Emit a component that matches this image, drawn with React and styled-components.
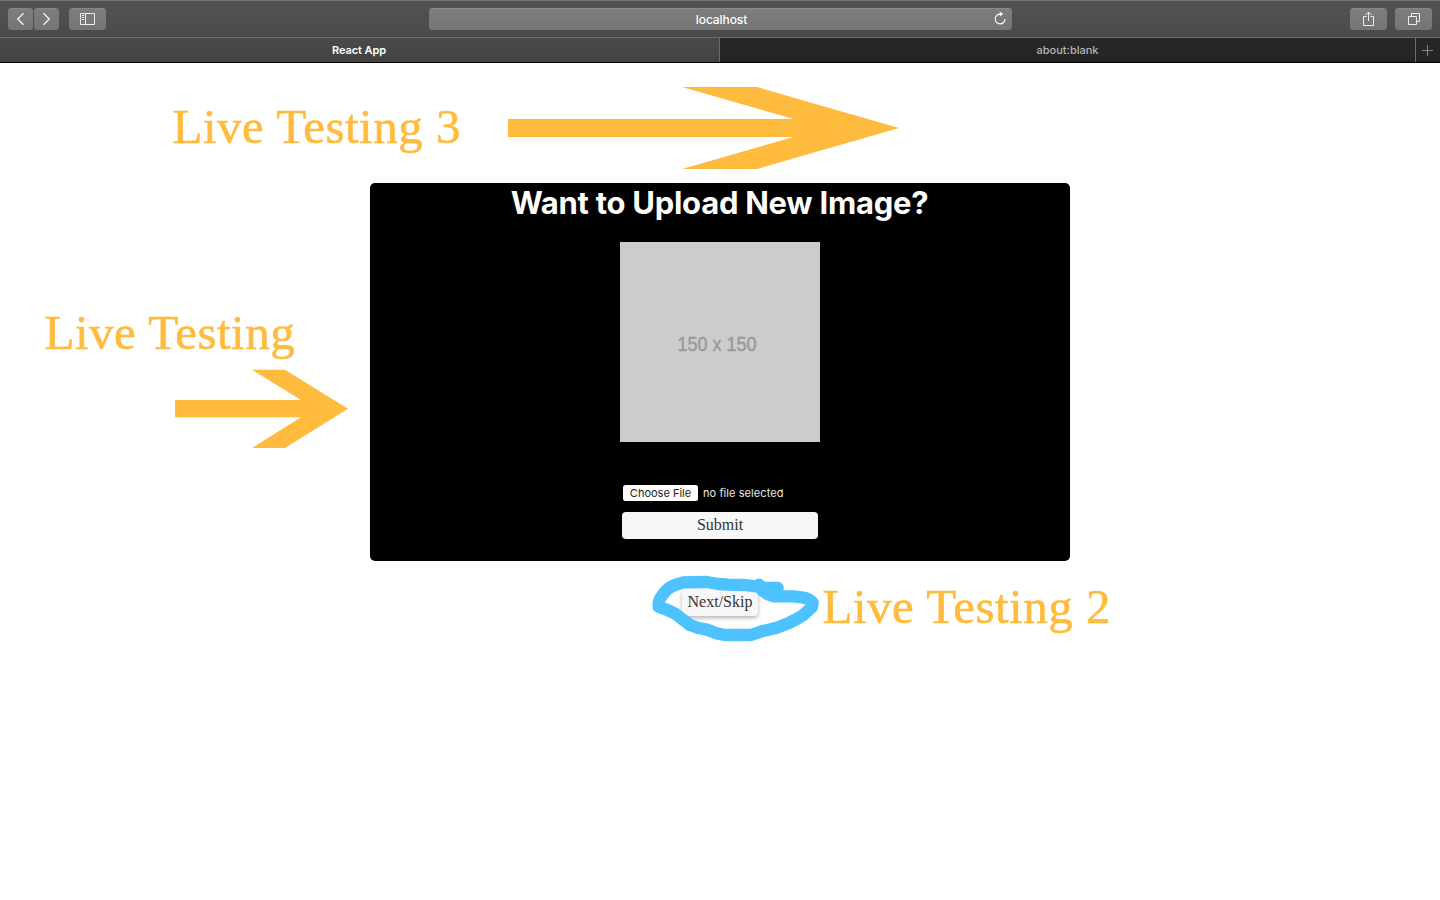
import React from "react";
import styled, { createGlobalStyle } from "styled-components";

const GlobalStyle = createGlobalStyle`
  * { box-sizing: border-box; }
  html, body { margin: 0; background: #fff; overflow: hidden; }
  button { font: inherit; border: 0; padding: 0; margin: 0; }
`;

const Page = styled.div`
  position: relative;
  width: 1440px;
  height: 900px;
  overflow: hidden;
  font-family: "Liberation Serif", "Times New Roman", serif;
`;

const Toolbar = styled.header`
  display: grid;
  grid-template-columns: 429px 583px 1fr;
  align-items: start;
  height: 37px;
  padding-top: 7px;
  border-top: 1px solid #727272;
  background: linear-gradient(#535353, #4a4a4a);
`;

const ToolGroup = styled.div`
  display: flex;
  gap: ${(p) => p.$gap}px;
  justify-content: ${(p) => (p.$end ? "flex-end" : "flex-start")};
  padding: 0 ${(p) => (p.$end ? 8 : 0)}px 0 ${(p) => (p.$end ? 0 : 8)}px;
`;

const NavPair = styled.div`
  display: flex;
  gap: 1px;
`;

const ToolButton = styled.button`
  display: flex;
  align-items: center;
  justify-content: center;
  width: ${(p) => p.$width || 37}px;
  height: 22px;
  border-radius: 3.5px;
  background: linear-gradient(#7d7d7d, #747474);
  border-top: 1px solid #868686;
  color: #ececec;
  svg { display: block; margin-top: -1px; }
`;

const AddressBar = styled.div`
  display: grid;
  grid-template-columns: 24px 1fr 24px;
  align-items: center;
  justify-items: center;
  height: 22px;
  border-radius: 3.5px;
  border-top: 1px solid #8a8a8a;
  background: linear-gradient(#7d7d7d, #757575);
  color: #fff;
  font: 500 12px/20px Inter, sans-serif;
  letter-spacing: -0.1px;
  svg { display: block; margin-bottom: 3px; }
`;

const Address = styled.span`
  grid-column: 2;
  padding-left: 2px;
  padding-top: 1px;
`;

const TabBar = styled.nav`
  display: grid;
  grid-template-columns: 720px 696px 24px;
  height: 26px;
  border-top: 1px solid #6c6c6c;
  border-bottom: 1px solid #000;
`;

const Tab = styled.div`
  display: flex;
  align-items: center;
  justify-content: center;
  padding-right: ${(p) => (p.$last ? 2 : p.$active ? 1 : 0)}px;
  border-right: ${(p) => (p.$last ? 0 : 1)}px solid #6c6c6c;
  background: ${(p) => (p.$active ? "linear-gradient(#494949, #434343)" : "linear-gradient(#282828, #242424)")};
  color: ${(p) => (p.$active ? "#fff" : "#b4b4b4")};
  font: ${(p) => (p.$active ? 600 : 500)} 11px/24px Inter, sans-serif;
  letter-spacing: ${(p) => (p.$active ? "-0.1px" : "0")};
`;

const Content = styled.main`
  display: flex;
  flex-direction: column;
  align-items: center;
  padding-top: 120px;
`;

const UploadCard = styled.section`
  display: flex;
  flex-direction: column;
  align-items: center;
  width: 700px;
  height: 378px;
  border-radius: 5px;
  background: #000;
`;

const Title = styled.h1`
  margin: 0;
  height: 59px;
  color: #fff;
  font: 700 31px/39px Inter, sans-serif;
  letter-spacing: -0.27px;
  padding-right: 1px;
  white-space: nowrap;
`;

const Placeholder = styled.div`
  display: flex;
  align-items: center;
  justify-content: center;
  width: 200px;
  height: 200px;
  padding-top: 4px;
  padding-right: 6px;
  background: #ccc;
  color: #999;
  font: 20px/24px "Liberation Sans", Arial, sans-serif;
  -webkit-text-stroke: 0.4px #999;
  span { transform: scaleX(0.9); white-space: nowrap; }
`;

const FileField = styled.div`
  display: flex;
  align-items: center;
  gap: 5px;
  width: 194px;
  height: 16px;
  margin-top: 43px;
  color: #e8e8e8;
  font: 400 11px/16px Inter, sans-serif;
  letter-spacing: 0.08px;
  white-space: nowrap;
`;

const FileButton = styled.button`
  width: 75px;
  height: 16px;
  border-radius: 2.5px;
  background: #fff;
  color: #222;
  letter-spacing: 0;
`;

const ActionButton = styled.button`
  width: ${(p) => p.$width}px;
  height: ${(p) => p.$height}px;
  margin-top: ${(p) => p.$top}px;
  border-radius: 4px;
  background: #f7f7f7;
  color: #333;
  font-size: 16px;
  line-height: ${(p) => p.$height - 2}px;
  padding-bottom: 2px;
  white-space: nowrap;
  box-shadow: ${(p) => (p.$raised ? "0 2px 4px rgba(0, 0, 0, 0.3)" : "none")};
`;

const SkipRow = styled.div`
  display: flex;
  width: 76px;
`;

const Ink = styled.svg`
  position: absolute;
  left: 0;
  top: 0;
  pointer-events: none;
`;

const Note = styled.div`
  position: absolute;
  left: ${(p) => p.$x}px;
  top: ${(p) => p.$y}px;
  color: #ffbb3d;
  font-size: 49px;
  line-height: 56px;
  letter-spacing: 0.5px;
  -webkit-text-stroke: 0.6px #ffbb3d;
  white-space: nowrap;
`;

const Icon = ({ w, h, children, sw = 1 }) => (
  <svg width={w} height={h} viewBox={`0 0 ${w} ${h}`} fill="none" stroke="currentColor" strokeWidth={sw}>
    {children}
  </svg>
);

export default function App() {
  return (
    <Page>
      <GlobalStyle />
      <Toolbar>
        <ToolGroup $gap={10}>
          <NavPair>
            <ToolButton $width={25} aria-label="Back">
              <Icon w={9} h={14} sw={1.5}><path d="M7.5 1.3 1.8 7l5.7 5.7" /></Icon>
            </ToolButton>
            <ToolButton $width={25} aria-label="Forward">
              <Icon w={9} h={14} sw={1.5}><path d="M1.5 1.3 7.2 7l-5.7 5.7" /></Icon>
            </ToolButton>
          </NavPair>
          <ToolButton aria-label="Sidebar">
            <Icon w={15} h={12}>
              <path d="M.5.5h14v11H.5zM5.5.5v11M2 2.5h2M2 4.5h2M2 6.5h2" />
            </Icon>
          </ToolButton>
        </ToolGroup>
        <AddressBar>
          <Address>localhost</Address>
          <Icon w={12} h={14} sw={1.1}>
            <path d="M6.3 3.1A4.9 4.9 0 1 0 11 8" />
            <path d="M5.8.4 9.2 3.1 5.8 5.6z" fill="currentColor" stroke="none" />
          </Icon>
        </AddressBar>
        <ToolGroup $gap={8} $end>
          <ToolButton aria-label="Share">
            <Icon w={13} h={16}>
              <path d="M4.5 5.5h-3v9h10v-9h-3M6.5 10V1M3.5 4l3-3 3 3" />
            </Icon>
          </ToolButton>
          <ToolButton aria-label="Tabs">
            <Icon w={13} h={14}>
              <path d="M1.5 4.5h8v8h-8zM4.5 4V1.5h8v8H10" />
            </Icon>
          </ToolButton>
        </ToolGroup>
      </Toolbar>
      <TabBar>
        <Tab $active>React App</Tab>
        <Tab>about:blank</Tab>
        <Tab $last>
          <Icon w={11} h={11}><path stroke="#858585" d="M5.5 0v11M0 5.5h11" /></Icon>
        </Tab>
      </TabBar>
      <Content>
        <UploadCard>
          <Title>Want to Upload New Image?</Title>
          <Placeholder><span>150 x 150</span></Placeholder>
          <FileField>
            <FileButton>Choose File</FileButton>
            <span>no file selected</span>
          </FileField>
          <ActionButton $width={196} $height={27} $top={11}>Submit</ActionButton>
        </UploadCard>
        <SkipRow>
          <ActionButton $width={76} $height={27} $top={28} $raised>Next/Skip</ActionButton>
        </SkipRow>
      </Content>
      <Ink width="1440" height="900" viewBox="0 0 1440 900">
        <g fill="#ffbb3d">
          <path d="M508 119H793.5L682 87H757L899 128 757 169H682L793.5 137H508z" />
          <path d="M175 400H301L252 369.7H285L348 408.7 285 448H252L301 417.3H175z" />
        </g>
        <path
          transform="translate(640 570) scale(.33333)"
          fill="none"
          stroke="#4dc2ff"
          strokeWidth="37"
          strokeLinecap="round"
          strokeLinejoin="round"
          d="M413 54H381L348 49 315 45 265 44 235 42 200 36 130 37 110 43Q90 50 80 60T60 86L56 100V110L80 119 107 132 130 150 150 165 175 174 202 179 230 190 255 195H333L365 184 410 173 445 160 470 147 490 135 515 112 518 98Q509 85 485 82L460 79H400L383 72 368 62 357 44"
        />
      </Ink>
      <Note $x={172.5} $y={99}>Live Testing 3</Note>
      <Note $x={44.5} $y={305}>Live Testing</Note>
      <Note $x={822.5} $y={579}>Live Testing 2</Note>
    </Page>
  );
}
